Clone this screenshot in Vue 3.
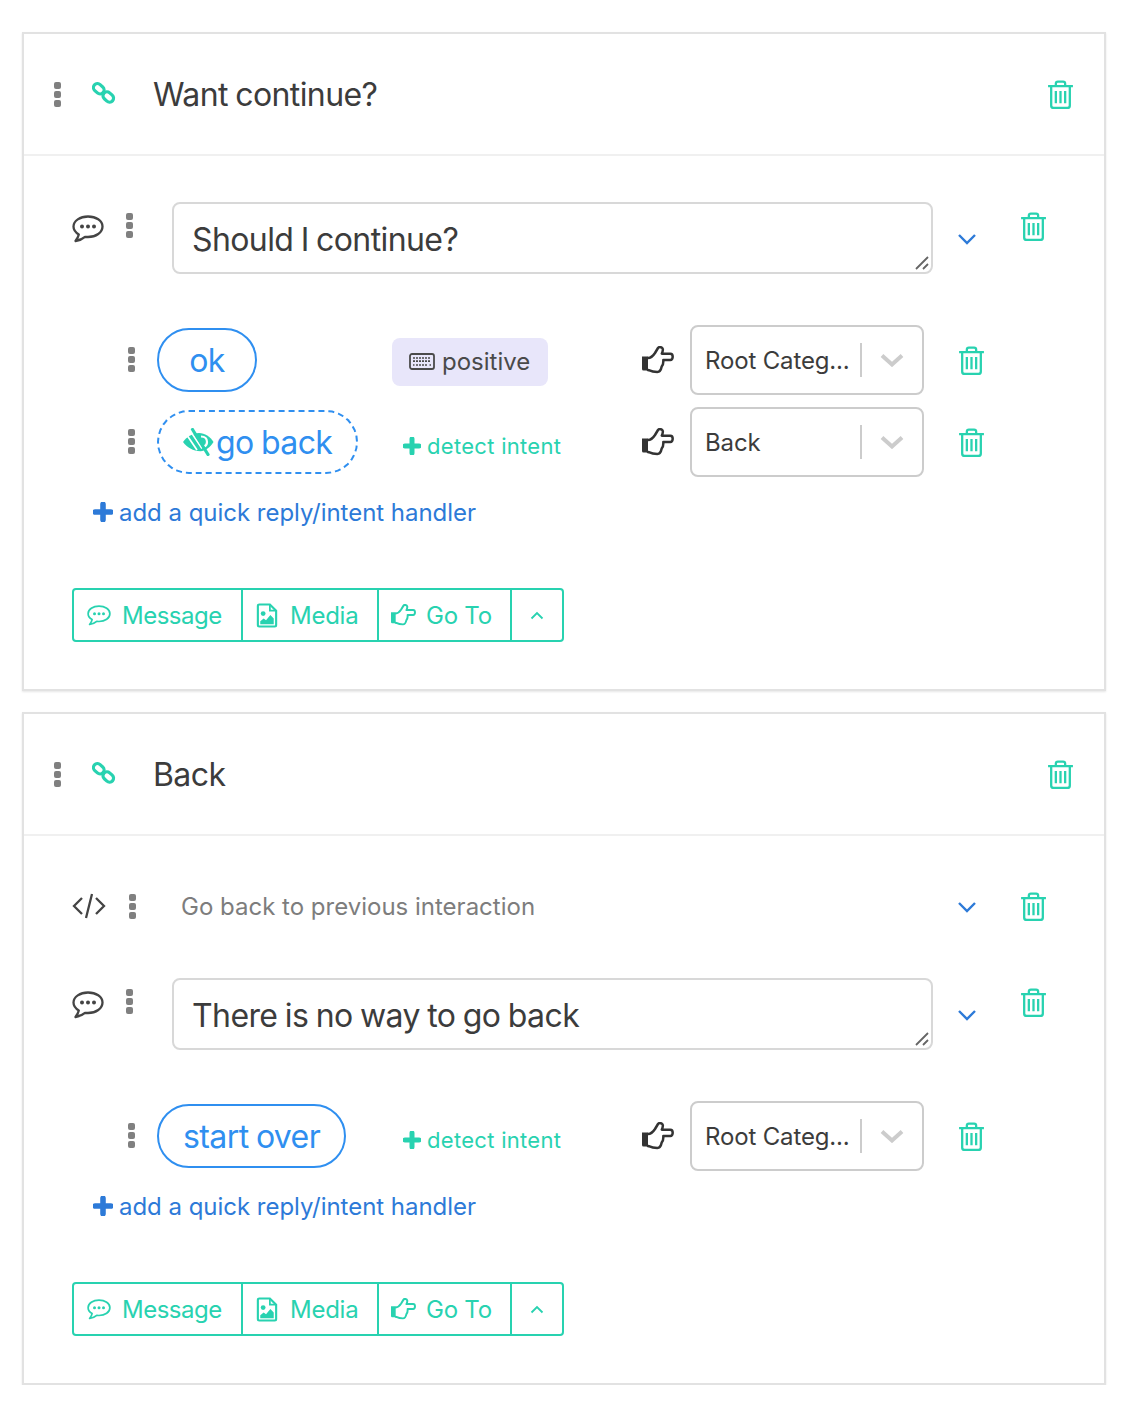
<template>
  <svg class="sprite" aria-hidden="true">
    <symbol id="i-trash" viewBox="0 0 26 28">
      <path d="M1 6h24M4 6v18.500A2.500 2.500 0 0 0 6.500 27h13a2.500 2.500 0 0 0 2.500-2.500V6M8.500 6V3.500A2 2 0 0 1 10.500 1.500h5a2 2 0 0 1 2 2V6" fill="none" stroke="currentColor" stroke-width="2.200"/>
      <path d="M8.500 10.500v12M13 10.500v12M17.500 10.500v12" fill="none" stroke="currentColor" stroke-width="2.200"/>
    </symbol>
    <symbol id="i-link" viewBox="0 0 24 24">
      <g fill="none" stroke="currentColor" stroke-width="3.200">
        <rect x="1" y="2.800" width="11.500" height="8" rx="4" transform="rotate(42 6.800 6.800)"/>
        <rect x="10.500" y="11" width="11.500" height="8" rx="4" transform="rotate(42 16.300 15)"/>
      </g>
    </symbol>
    <symbol id="i-comment" viewBox="0 0 32 28">
      <path d="M16 1.500C8 1.500 1.500 5.800 1.500 11.500c0 3.300 2.100 6 5.300 7.900-.4 2-1.500 4-3.300 6.600 3.600-.6 7-2 9.500-4.200 1 .1 2 .2 3 .2 8 0 14.500-4.500 14.500-10.500S24 1.500 16 1.500z" fill="none" stroke="currentColor" stroke-width="2.300" stroke-linejoin="round"/>
      <circle cx="10" cy="11.500" r="2" fill="currentColor"/>
      <circle cx="16" cy="11.500" r="2" fill="currentColor"/>
      <circle cx="22" cy="11.500" r="2" fill="currentColor"/>
    </symbol>
    <symbol id="i-hand" viewBox="0 0 32 28">
      <path d="M0 10.500h6v14H1.500A1.500 1.500 0 0 1 0 23z" fill="currentColor"/>
      <path d="M6 12c3 0 5-2 7-5l3-5c1.200-1.600 4.300-1 4.800 1 .3 1.500-.3 3-1 4.700h8.500c3.200 0 3.200 6.300 0 6.300h-7c.2 2.500-.4 5-1.600 6.500-.6 3-2 5.500-4.400 5.500-3.500 0-6-.6-8.500-1.800L6 24" fill="none" stroke="currentColor" stroke-width="2.500" stroke-linejoin="round" stroke-linecap="round"/>
    </symbol>
    <symbol id="i-image" viewBox="0 0 22 26">
      <path d="M1.500 3a1.500 1.500 0 0 1 1.500-1.500h11l6.500 6.500v15a1.500 1.500 0 0 1-1.500 1.500H3A1.500 1.500 0 0 1 1.500 23z" fill="none" stroke="currentColor" stroke-width="2.200"/>
      <path d="M14 1.500V8h6.500" fill="none" stroke="currentColor" stroke-width="1.800"/>
      <circle cx="7" cy="11" r="2.500" fill="currentColor"/>
      <path d="M4 22v-3l3.500-3 2.500 2 4.500-5.500L18 16v6z" fill="currentColor"/>
    </symbol>
    <symbol id="i-keyboard" viewBox="0 0 26 17">
      <rect x="1" y="1" width="24" height="15" rx="2" fill="none" stroke="currentColor" stroke-width="1.800"/>
      <path d="M4 5h18M4 8.200h18M4 12h1.500M7 12h12M20.500 12H22" fill="none" stroke="currentColor" stroke-width="1.700" stroke-dasharray="2 1"/>
    </symbol>
    <symbol id="i-low-vision" viewBox="0 0 33 28">
      <path d="M0 14C4 8.500 10 5 16 5c6 0 11 3.500 14.500 9-3.500 5.500-8 8.800-13 9.200C10 23 4 19.500 0 14z" fill="currentColor"/>
      <path d="M4.500 8l9.500 14M9 5.500l10 15" stroke="#fff" stroke-width="1.700" fill="none"/>
      <path d="M18 8.500c3.800 0 6 2.300 6 5.500 0 2.400-1.300 4-3 4.800" stroke="#fff" stroke-width="2.200" fill="none"/>
      <path d="M9.500 1.500l15.500 25" stroke="currentColor" stroke-width="3.200" stroke-linecap="round" fill="none"/>
    </symbol>
    <symbol id="i-plus" viewBox="0 0 18 18">
      <path d="M9 2v14M2 9h14" stroke="currentColor" stroke-width="5" stroke-linecap="round" fill="none"/>
    </symbol>
    <symbol id="i-down" viewBox="0 0 20 12">
      <path d="M2 2l8 8 8-8" stroke="currentColor" stroke-width="2.400" fill="none"/>
    </symbol>
    <symbol id="i-caret" viewBox="0 0 24 14">
      <path d="M2 2.500l10 9 10-9" stroke="currentColor" stroke-width="4" fill="none"/>
    </symbol>
  </svg>

  <div class="page">
    <section v-for="card in cards" :key="card.title" class="card">
      <header class="card-head">
        <span class="kebab"><i></i><i></i><i></i></span>
        <svg class="link-icon"><use href="#i-link" /></svg>
        <h2 class="card-title">{{ card.title }}</h2>
        <svg class="trash"><use href="#i-trash" /></svg>
      </header>

      <div class="card-body">
        <div v-if="card.code" class="code-row">
          <span class="code-icon">
            <svg viewBox="0 0 34 26"><path d="M10 5L2 13l8 8M24 5l8 8-8 8M20 1l-6 24" fill="none" stroke="currentColor" stroke-width="2.300"/></svg>
          </span>
          <span class="kebab"><i></i><i></i><i></i></span>
          <span class="code-text">{{ card.code }}</span>
          <svg class="chevron"><use href="#i-down" /></svg>
          <svg class="trash"><use href="#i-trash" /></svg>
        </div>

        <div class="message-row">
          <svg class="comment"><use href="#i-comment" /></svg>
          <span class="kebab"><i></i><i></i><i></i></span>
          <div class="textarea">
            {{ card.message }}
            <svg class="grip" viewBox="0 0 14 14"><path d="M1 13L13 1M8 13l5-5" stroke="#666" stroke-width="1.800" fill="none"/></svg>
          </div>
          <svg class="chevron"><use href="#i-down" /></svg>
          <svg class="trash"><use href="#i-trash" /></svg>
        </div>

        <div class="replies">
          <div v-for="reply in card.replies" :key="reply.label" class="reply">
            <span class="kebab"><i></i><i></i><i></i></span>
            <div class="pill-cell">
              <span class="pill" :class="{ dashed: reply.hidden }">
                <svg v-if="reply.hidden" class="low-vision"><use href="#i-low-vision" /></svg>{{ reply.label }}
              </span>
            </div>
            <div class="intent-cell">
              <span v-if="reply.intent" class="chip">
                <svg class="keyboard"><use href="#i-keyboard" /></svg>{{ reply.intent }}
              </span>
              <span v-else class="detect">
                <svg class="plus-sm"><use href="#i-plus" /></svg>detect intent
              </span>
            </div>
            <svg class="hand"><use href="#i-hand" /></svg>
            <div class="select">
              <span class="select-value">{{ reply.target }}</span>
              <span class="select-sep"></span>
              <svg class="select-arrow"><use href="#i-caret" /></svg>
            </div>
            <svg class="trash"><use href="#i-trash" /></svg>
          </div>
        </div>

        <a class="add-link">
          <svg class="plus"><use href="#i-plus" /></svg>add a quick reply/intent handler
        </a>

        <div class="toolbar">
          <button class="tool tool-message"><svg class="tool-comment"><use href="#i-comment" /></svg>Message</button>
          <button class="tool tool-media"><svg class="tool-image"><use href="#i-image" /></svg>Media</button>
          <button class="tool tool-goto"><svg class="tool-hand"><use href="#i-hand" /></svg>Go To</button>
          <button class="tool tool-up">
            <svg viewBox="0 0 14 9"><path d="M1.500 7.500L7 2l5.500 5.500" stroke="currentColor" stroke-width="1.800" fill="none"/></svg>
          </button>
        </div>
      </div>
    </section>
  </div>
</template>

<script setup>
const cards = [
  {
    title: 'Want continue?',
    message: 'Should I continue?',
    replies: [
      { label: 'ok', intent: 'positive', target: 'Root Categ...' },
      { label: 'go back', hidden: true, target: 'Back' }
    ]
  },
  {
    title: 'Back',
    code: 'Go back to previous interaction',
    message: 'There is no way to go back',
    replies: [
      { label: 'start over', target: 'Root Categ...' }
    ]
  }
]
</script>

<style scoped>
.sprite {
  position: absolute;
  width: 0;
  height: 0;
}

.page {
  display: flex;
  flex-direction: column;
  gap: 21px;
  width: 1084px;
  padding: 32px 0 0 22px;
  font-family: Inter, "Liberation Sans", sans-serif;
  color: #3c3c3c;
}

.card {
  background: #fff;
  border: 2px solid #e2e2e2;
  box-shadow: 0 1px 2px rgba(0, 0, 0, 0.1);
}

.card-head {
  display: flex;
  align-items: center;
  height: 120px;
  padding: 0 30px 0 30px;
  border-bottom: 2px solid #f0f0f0;
}

.card-head .kebab {
  margin-right: 31px;
}

.kebab {
  display: flex;
  flex-direction: column;
  gap: 2px;
  flex: none;
  width: 7px;
}

.kebab i {
  display: block;
  width: 7px;
  height: 7px;
  border-radius: 2px;
  background: #808080;
}

.link-icon {
  width: 24px;
  height: 24px;
  color: #28d2b0;
  margin-right: 37px;
}

.card-title {
  flex: 1;
  margin: 0;
  font-size: 32px;
  font-weight: 400;
  letter-spacing: -0.6px;
  word-spacing: -1px;
}

.trash {
  flex: none;
  width: 27px;
  height: 29px;
  color: #28d2b0;
}

.card-body {
  padding: 46px 0 47px 48px;
}

.code-row {
  display: flex;
  align-items: center;
  height: 48px;
  margin-bottom: 48px;
}

.code-icon {
  display: flex;
  width: 34px;
  height: 26px;
  color: #444;
  margin-right: 23px;
}

.code-text {
  flex: none;
  width: 821px;
  padding-left: 45px;
  font-size: 24px;
  color: #7d7d7d;
  box-sizing: border-box;
}

.code-row .chevron {
  margin: 2px 43px 0 0;
}

.message-row {
  display: grid;
  grid-template-columns: 54px 46px 761px 87px 27px;
  align-items: start;
  height: 72px;
}

.message-row .kebab {
  margin-top: 11px;
}

.comment {
  width: 32px;
  height: 28px;
  margin-top: 13px;
  color: #444;
}

.textarea {
  position: relative;
  display: flex;
  align-items: center;
  height: 72px;
  padding: 2px 0 0 18px;
  box-sizing: border-box;
  border: 2px solid #d8d8d8;
  border-radius: 8px;
  font-size: 32px;
  letter-spacing: -0.6px;
  word-spacing: -1px;
}

.grip {
  position: absolute;
  right: 2px;
  bottom: 2px;
  width: 14px;
  height: 14px;
}

.chevron {
  width: 20px;
  height: 12px;
  margin: 31px 0 0 24px;
  color: #2d7ad8;
}

.message-row .trash {
  margin-top: 10px;
}

.replies {
  display: flex;
  flex-direction: column;
  gap: 12px;
  margin-top: 51px;
}

.reply {
  display: grid;
  grid-template-columns: 29px 235px 250px 48px 234px 61px;
  align-items: center;
  height: 70px;
  margin-left: 56px;
}

.reply .kebab {
  margin-top: -2px;
}

.reply .trash {
  margin-left: 34px;
}

.pill {
  display: inline-flex;
  align-items: center;
  justify-content: center;
  min-width: 100px;
  height: 64px;
  padding: 0 24px;
  box-sizing: border-box;
  border: 2px solid #2f8ff0;
  border-radius: 32px;
  font-size: 32px;
  letter-spacing: -0.6px;
  word-spacing: -1px;
  color: #2f8ff0;
}

.pill.dashed {
  border-style: dashed;
}

.low-vision {
  width: 33px;
  height: 28px;
  color: #28d2b0;
}

.intent-cell {
  margin-top: 4px;
}

.chip {
  display: inline-flex;
  align-items: center;
  height: 48px;
  padding: 0 18px 1px 17px;
  box-sizing: border-box;
  border-radius: 8px;
  background: #e8e6fa;
  font-size: 24px;
  color: #4a4a4a;
}

.keyboard {
  width: 26px;
  height: 17px;
  margin-right: 7px;
}

.detect {
  display: inline-flex;
  align-items: center;
  margin-left: 11px;
  margin-top: 4px;
  font-size: 22px;
  letter-spacing: 0.3px;
  color: #28d2b0;
}

.plus-sm {
  width: 18px;
  height: 18px;
  margin-right: 6px;
}

.hand {
  width: 32px;
  height: 28px;
  color: #333;
}

.select {
  display: flex;
  align-items: center;
  height: 70px;
  padding-left: 13px;
  box-sizing: border-box;
  border: 2px solid #ccc;
  border-radius: 8px;
}

.select-value {
  width: 155px;
  font-size: 24px;
  letter-spacing: -0.15px;
  white-space: nowrap;
}

.select-sep {
  width: 2px;
  height: 34px;
  background: #ccc;
}

.select-arrow {
  width: 24px;
  height: 14px;
  margin-left: 18px;
  color: #ccc;
}

.add-link {
  display: flex;
  align-items: center;
  height: 28px;
  margin: 21px 0 0 21px;
  font-size: 24px;
  letter-spacing: -0.03px;
  color: #2d7ad8;
}

.plus {
  width: 20px;
  height: 20px;
  margin-right: 6px;
}

.toolbar {
  display: flex;
  width: 492px;
  height: 54px;
  margin-top: 62px;
  box-sizing: border-box;
  border: 2px solid #28d2b0;
  border-radius: 4px;
}

.tool {
  display: flex;
  align-items: center;
  padding: 0 0 0 13px;
  box-sizing: border-box;
  border: 0;
  border-right: 2px solid #28d2b0;
  background: none;
  font-family: inherit;
  font-size: 24px;
  letter-spacing: -0.25px;
  color: #28d2b0;
}

.tool-message { width: 169px; letter-spacing: -0.5px; }
.tool-media { width: 136px; }
.tool-goto { width: 133px; padding-left: 12px; }

.tool-up {
  flex: 1;
  justify-content: center;
  padding: 0;
  border-right: 0;
}

.tool-up svg {
  width: 14px;
  height: 9px;
}

.tool-comment {
  width: 24px;
  height: 21px;
  margin-right: 11px;
}

.tool-image {
  width: 22px;
  height: 25px;
  margin-right: 12px;
}

.tool-hand {
  width: 25px;
  height: 22px;
  margin-right: 10px;
}
</style>
